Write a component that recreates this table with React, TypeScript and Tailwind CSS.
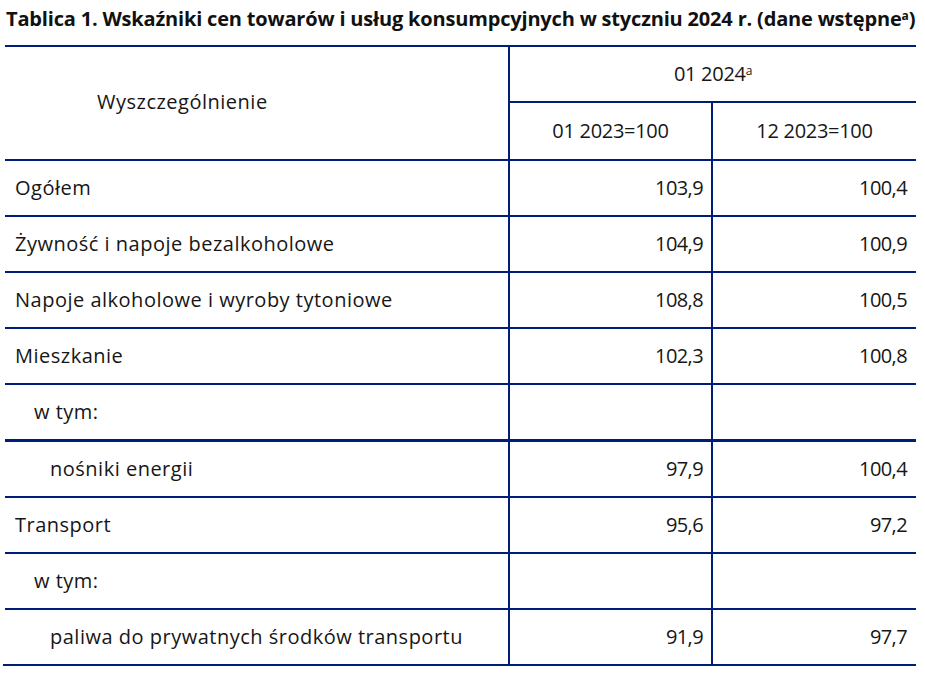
const rows: { label: string; indent: number; a: string; b: string; thick?: boolean }[] = [
  { label: 'Ogółem', indent: 0, a: '103,9', b: '100,4' },
  { label: 'Żywność i napoje bezalkoholowe', indent: 0, a: '104,9', b: '100,9' },
  { label: 'Napoje alkoholowe i wyroby tytoniowe', indent: 0, a: '108,8', b: '100,5' },
  { label: 'Mieszkanie', indent: 0, a: '102,3', b: '100,8' },
  { label: 'w tym:', indent: 1, a: '', b: '', thick: true },
  { label: 'nośniki energii', indent: 2, a: '97,9', b: '100,4' },
  { label: 'Transport', indent: 0, a: '95,6', b: '97,2' },
  { label: 'w tym:', indent: 1, a: '', b: '' },
  { label: 'paliwa do prywatnych środków transportu', indent: 2, a: '91,9', b: '97,7' },
];

const indentClass = ['pl-[10px]', 'pl-[29px]', 'pl-[45px]'];

export default function App() {
  return (
    <div className="w-[925px] h-[676px] bg-white text-[#161616]" style={{ fontFamily: '"Open Sans", sans-serif' }}>
      {/* Title */}
      <div className="h-[45px] pl-[6px] pt-[5px]">
        <h1 className="text-[20px] font-bold leading-[27px] tracking-[-0.18px] text-[#111]">
          Tablica 1. Wskaźniki cen towarów i usług konsumpcyjnych w styczniu 2024 r. (dane wstępne
          <sup className="text-[12px]">a</sup>)
        </h1>
      </div>

      {/* Table */}
      <div className="ml-[5px] w-[911px] border-t-2 border-[#001e78] text-[20px]">
        {/* Header */}
        <div className="flex h-[114px] border-b-2 border-[#001e78]">
          <div className="w-[503px] flex items-center pl-[92px] pb-[2px] tracking-[0.5px]">Wyszczególnienie</div>
          <div className="flex-1 flex flex-col border-l-2 border-[#001e78]">
            <div className="h-[56px] flex items-center justify-center border-b-2 border-[#001e78]">
              <span className="tracking-[-0.3px]">
                01 2024<sup className="text-[12px]">a</sup>
              </span>
            </div>
            <div className="flex flex-1 tracking-[-0.3px]">
              <div className="w-[201px] flex items-center justify-center">01 2023=100</div>
              <div className="flex-1 flex items-center justify-center border-l-2 border-[#001e78]">12 2023=100</div>
            </div>
          </div>
        </div>

        {/* Body */}
        {rows.map((r, i) => (
          <div
            key={i}
            className={`flex ${r.thick ? 'h-[57px] border-b-[3px]' : 'h-[56px] border-b-2'} border-[#001e78] ${
              i === rows.length - 1 ? '-ml-[2px]' : ''
            }`}
          >
            <div className={`${i === rows.length - 1 ? 'w-[505px]' : 'w-[503px]'} flex items-center tracking-[0.5px] ${indentClass[r.indent]}`}>
              <span className={i === rows.length - 1 ? 'ml-[2px]' : ''}>{r.label}</span>
            </div>
            <div className="w-[203px] flex items-center justify-end pr-[8px] tracking-[-0.6px] border-l-2 border-[#001e78]">{r.a}</div>
            <div className="flex-1 flex items-center justify-end pr-[9px] tracking-[-0.6px] border-l-2 border-[#001e78]">{r.b}</div>
          </div>
        ))}
      </div>
    </div>
  );
}
